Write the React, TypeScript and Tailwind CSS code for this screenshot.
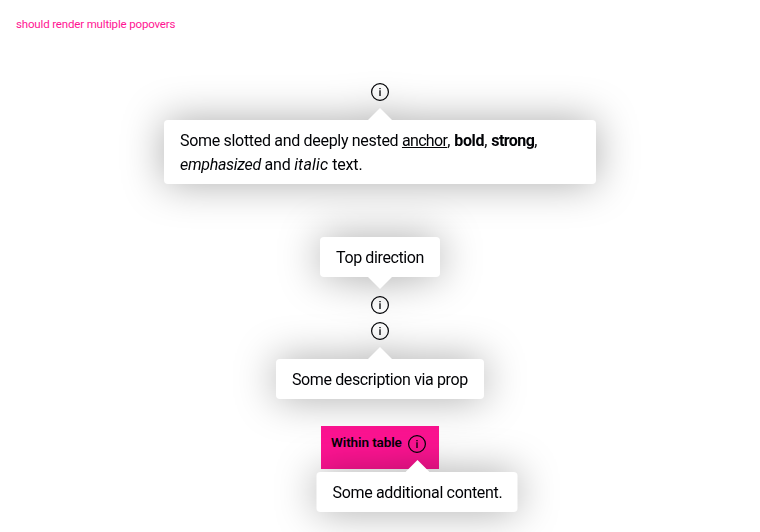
import type { ReactNode } from "react";

function InfoIcon() {
  return (
    <svg viewBox="0 0 24 24" className="block size-6" fill="none">
      <circle cx="12" cy="12" r="8.4" stroke="#010205" strokeWidth="1.2" />
      <path d="M11.35 10.3h1.3v5.6h-1.3zM11.35 8h1.3v1.3h-1.3z" fill="#010205" />
    </svg>
  );
}

type PopoverProps = {
  children: ReactNode;
  direction?: "top" | "bottom";
  width: string;
};

function Popover({ children, direction = "bottom", width }: PopoverProps) {
  const top = direction === "top";
  return (
    <div className="relative size-6">
      <InfoIcon />
      <div
        className={`absolute left-1/2 flex -translate-x-1/2 items-center drop-shadow-[0_0_20px_rgba(0,0,0,0.33)] ${
          top ? "bottom-7 flex-col-reverse" : "top-7 flex-col"
        } ${width}`}
      >
        <svg viewBox="0 0 24 12" className={`block h-3 w-6 shrink-0 ${top ? "rotate-180" : ""}`}>
          <path d="M0 12L12 0l12 12z" fill="#fff" />
        </svg>
        <div className="w-full rounded bg-white px-4 pt-[9px] pb-[7px] text-base leading-6 whitespace-nowrap text-[#010205]">
          {children}
        </div>
      </div>
    </div>
  );
}

export default function App() {
  return (
    <main className="flex h-[532px] w-[760px] flex-col items-center overflow-hidden bg-white font-['Roboto','Liberation_Sans',sans-serif]">
      <h1 className="h-20 w-full px-4 pt-4 text-[11.5px] leading-4 font-normal tracking-[-0.16px] text-[#ff1493]">
        should render multiple popovers
      </h1>
      <Popover width="w-[432px]">
        <div>
          <span className="tracking-[-0.31px]">Some slotted and deeply nested </span>
          <a className="tracking-[-0.68px] underline">anchor</a>,{" "}
          <b className="tracking-[-0.35px]">bold</b>,{" "}
          <strong className="tracking-[-0.57px]">strong</strong>,
        </div>
        <div>
          <em className="tracking-[-0.3px]">emphasized</em>
          <span className="tracking-[-0.25px]"> and </span>
          <i className="tracking-[0.2px]">italic</i>
          <span className="tracking-[-0.15px]"> text.</span>
        </div>
      </Popover>
      <div className="mt-[189px]">
        <Popover direction="top" width="w-[120px]">
          <span className="tracking-[-0.38px]">Top direction</span>
        </Popover>
      </div>
      <div className="mt-0.5">
        <Popover width="w-[208px]">
          <span className="tracking-[-0.38px]">Some description via prop</span>
        </Popover>
      </div>
      <table className="mt-[83px] border-collapse">
        <tbody>
          <tr>
            <th className="h-[43px] w-[118px] bg-[#ff1493] p-0 pt-1.5 pl-2.5 align-top">
              <div className="flex items-start">
                <span className="w-[74px] text-left text-[13.5px] leading-5 font-semibold tracking-[-0.1px] whitespace-nowrap text-[#010205]">
                  Within table
                </span>
                <div className="text-left font-normal">
                  <Popover width="w-[201px]">
                    <span className="tracking-[-0.33px]">Some additional content.</span>
                  </Popover>
                </div>
              </div>
            </th>
          </tr>
        </tbody>
      </table>
    </main>
  );
}
